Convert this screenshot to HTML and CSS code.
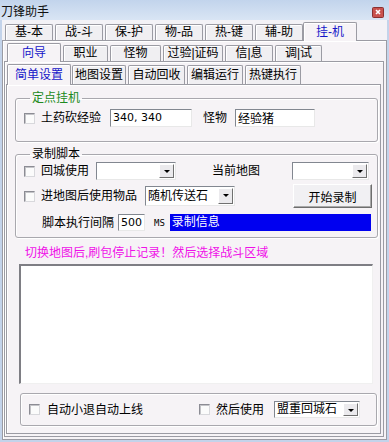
FILE: index.html
```html
<!DOCTYPE html>
<html lang="zh-CN">
<head>
    <meta charset="UTF-8">
    <title>刀锋助手</title>
    <link rel="stylesheet" href="styles.css">
</head>
<body>
<div class="window">
    <div class="titlebar">
        <span class="title">刀锋助手</span>
        <svg class="close-btn" width="12" height="11" viewBox="0 0 12 11">
            <rect x="0.5" y="0.5" width="11" height="10" rx="1" fill="#c9524e" stroke="#8a3030"/>
            <path d="M4 3 L8 7 M8 3 L4 7" stroke="#fff" stroke-width="1.6"/>
        </svg>
    </div>

    <div class="tabs tabs-main">
        <div class="tab">基-本</div>
        <div class="tab">战-斗</div>
        <div class="tab">保-护</div>
        <div class="tab">物-品</div>
        <div class="tab">热-键</div>
        <div class="tab">辅-助</div>
        <div class="tab active w54">挂-机</div>
    </div>

    <div class="page page-main">
        <div class="tabs tabs-sub">
            <div class="tab active w54">向导</div>
            <div class="tab w45">职业</div>
            <div class="tab w51">怪物</div>
            <div class="tab w60">过验|证码</div>
            <div class="tab w48">信|息</div>
            <div class="tab w47">调|试</div>
        </div>

        <div class="page page-sub">
            <div class="tabs tabs-inner">
                <div class="tab active w64">简单设置</div>
                <div class="tab w54">地图设置</div>
                <div class="tab w57">自动回收</div>
                <div class="tab w56">编辑运行</div>
                <div class="tab w56">热键执行</div>
            </div>

            <div class="page page-inner">
                <!-- 定点挂机 -->
                <fieldset class="group group-fixed">
                    <legend class="legend-green">定点挂机</legend>
                    <div class="row">
                        <span class="check"></span>
                        <span class="label">土药砍经验</span>
                        <span class="field field-coords">340, 340</span>
                        <span class="label label-monster">怪物</span>
                        <span class="field field-monster">经验猪</span>
                    </div>
                </fieldset>

                <!-- 录制脚本 -->
                <fieldset class="group group-record">
                    <legend>录制脚本</legend>
                    <div class="row row-1">
                        <span class="check"></span>
                        <span class="label">回城使用</span>
                        <span class="combo combo-town"><span class="combo-text"></span><span class="combo-btn"></span></span>
                        <span class="label label-map">当前地图</span>
                        <span class="combo combo-map"><span class="combo-text"></span><span class="combo-btn"></span></span>
                    </div>
                    <div class="row row-2">
                        <span class="check"></span>
                        <span class="label">进地图后使用物品</span>
                        <span class="combo combo-item"><span class="combo-text">随机传送石</span><span class="combo-btn"></span></span>
                        <button class="btn">开始录制</button>
                    </div>
                    <div class="row row-3">
                        <span class="label label-interval">脚本执行间隔</span>
                        <span class="field field-ms">500</span>
                        <span class="unit">MS</span>
                        <span class="record-info">录制信息</span>
                    </div>
                </fieldset>

                <div class="hint">切换地图后,刷包停止记录！然后选择战斗区域</div>

                <div class="log"></div>

                <div class="group group-bottom">
                    <span class="check"></span>
                    <span class="label label-relogin">自动小退自动上线</span>
                    <span class="check check-then"></span>
                    <span class="label">然后使用</span>
                    <span class="combo combo-stone"><span class="combo-text">盟重回城石</span><span class="combo-btn"></span></span>
                </div>
            </div>
        </div>
    </div>
</div>
</body>
</html>
```

FILE: styles.css
```css
* {
    box-sizing: border-box;
    margin: 0;
    padding: 0;
}

body {
    width: 389px;
    height: 442px;
    overflow: hidden;
    font-family: "Liberation Sans", "Noto Sans CJK SC", sans-serif;
    font-size: 12px;
    line-height: 14px;
    color: #000;
    background: #f3f2f6;
}

.window {
    height: 442px;
    display: flex;
    flex-direction: column;
    background: #f3f2f6;
    border-left: 2px solid #c3d3ea;
    border-right: 2px solid #c3d3ea;
    border-bottom: 2px solid #c3d3ea;
}

/* 标题栏 */
.titlebar {
    height: 20px;
    flex: none;
    display: flex;
    align-items: flex-end;
    justify-content: space-between;
    margin: 0 -2px;
    padding: 0 5px 1px 1px;
    background: linear-gradient(#c2d4ec, #d9e5f4);
}

.title {
    font-size: 12px;
    line-height: 14px;
    color: #111;
}

.close-btn {
    display: block;
    margin-bottom: 1px;
}

/* 选项卡 */
.tabs {
    display: flex;
    align-items: flex-end;
    flex: none;
}

.tab {
    position: relative;
    width: 48px;
    height: 16px;
    margin-right: 2px;
    border: 1px solid #9b9ba3;
    border-bottom: none;
    border-radius: 2px 2px 0 0;
    box-shadow: inset 1px 1px 0 #fff;
    background: #f0eff2;
    text-align: center;
    font-size: 12px;
    line-height: 15px;
}

.tab.active {
    z-index: 1;
    height: 19px;
    margin-bottom: -1px;
    background: #f6f3f6;
    color: #1515c8;
    line-height: 19px;
}

.tabs-main {
    height: 18px;
    margin-top: 2px;
    padding-left: 3px;
}

.tabs-main .tab.active {
    margin-left: -2px;
}

.tabs-sub {
    height: 18px;
    margin-top: 2px;
    padding-left: 3px;
}

.tabs-inner {
    height: 20px;
    margin-top: 2px;
    padding-left: 1px;
}

.tabs-inner .tab {
    height: 19px;
    line-height: 18px;
    margin-right: 2px;
}

.tabs-inner .tab.active {
    height: 21px;
    line-height: 20px;
    margin-right: 1px;
}

.w45 { width: 45px; }
.w47 { width: 47px; }
.w48 { width: 48px; }
.w51 { width: 51px; }
.w54 { width: 54px; }
.w56 { width: 56px; }
.w57 { width: 57px; }
.w60 { width: 60px; }
.w64 { width: 64px; }

/* 选项卡页 */
.page {
    flex: 1;
    display: flex;
    flex-direction: column;
    border: 1px solid #9b9ba3;
    box-shadow: inset 1px 1px 0 #fff;
    background: #f6f3f6;
}

.page-main {
    padding: 0 2px 2px 1px;
}

.page-sub {
    padding: 0 2px 2px 1px;
}

.page-inner {
    padding: 0 2px 0 8px;
}

/* 分组框 */
.group {
    border: 1px solid #a9a8ae;
    border-radius: 3px;
    box-shadow: inset 1px 1px 0 #fff, 1px 1px 0 #fff;
}

.group legend {
    margin-left: 6px;
    padding: 0 2px;
    font-size: 12px;
    line-height: 14px;
}

.legend-green {
    color: #208a20;
}

.group-fixed {
    margin-top: 6px;
    height: 51px;
    padding: 4px 0 0 8px;
}

.group-record {
    margin-top: 5px;
    height: 91px;
    padding: 1px 8px 0 8px;
}

.row {
    display: flex;
    align-items: center;
    height: 18px;
}

.row-2 {
    height: 24px;
    margin-top: 4px;
}

.row-3 {
    height: 17px;
    margin-top: 6px;
}

.check {
    flex: none;
    width: 11px;
    height: 11px;
    border: 1px solid #8c8c94;
    border-right-color: #d8d8dc;
    border-bottom-color: #d8d8dc;
    background: #fbfbfb;
    box-shadow: inset 1px 1px 0 #c4c4c8;
}

.label {
    margin-left: 6px;
    white-space: nowrap;
}

.field {
    height: 18px;
    padding: 0 2px;
    border: 1px solid #828790;
    border-right-color: #e8e8e8;
    border-bottom-color: #e8e8e8;
    background: #fff;
    font-family: "DejaVu Sans", "Noto Sans CJK SC", sans-serif;
    font-size: 11px;
    line-height: 16px;
    white-space: nowrap;
}

.field-coords {
    width: 82px;
    margin-left: 9px;
}

.label-monster {
    margin-left: 11px;
}

.field-monster {
    width: 80px;
    margin-left: 8px;
    font-family: "Noto Sans CJK SC", sans-serif;
    font-size: 12px;
}

/* 下拉框 */
.combo {
    display: flex;
    height: 18px;
    padding: 1px;
    border: 1px solid #828790;
    border-right-color: #e8e8e8;
    border-bottom-color: #e8e8e8;
    background: #fff;
}

.combo-text {
    flex: 1;
    padding-left: 1px;
    font-size: 12px;
    line-height: 14px;
    white-space: nowrap;
}

.combo-btn {
    flex: none;
    position: relative;
    width: 15px;
    border: 1px solid #fff;
    border-right-color: #707070;
    border-bottom-color: #707070;
    background: #ebeaed;
}

.combo-btn::after {
    content: "";
    position: absolute;
    left: 4px;
    top: 5px;
    border-left: 3px solid transparent;
    border-right: 3px solid transparent;
    border-top: 3px solid #000;
}

.combo-town {
    width: 80px;
    margin-left: 7px;
}

.label-map {
    margin-left: 36px;
}

.combo-map {
    width: 77px;
    margin-left: auto;
}

.combo-item {
    width: 90px;
    height: 20px;
    margin-left: 8px;
}

.combo-item .combo-text {
    line-height: 16px;
}

.btn {
    width: 79px;
    height: 24px;
    margin-left: auto;
    margin-right: -3px;
    border: 1px solid #fff;
    border-right-color: #6e6e6e;
    border-bottom-color: #6e6e6e;
    box-shadow: inset -1px -1px 0 #a8a8a8;
    background: #f1f0f3;
    font-family: "Noto Sans CJK SC", sans-serif;
    font-size: 12px;
    color: #000;
}

.label-interval {
    margin-left: 18px;
}

.field-ms {
    width: 27px;
    height: 17px;
    margin-left: 4px;
    line-height: 15px;
}

.unit {
    margin-left: 9px;
    font-family: "DejaVu Sans Mono", monospace;
    font-size: 9px;
}

.record-info {
    flex: 1;
    height: 17px;
    margin-left: 5px;
    margin-right: -2px;
    padding-left: 2px;
    background: #0000f0;
    color: #fff;
    line-height: 17px;
}

/* 提示与日志 */
.hint {
    margin: 8px 0 0 10px;
    color: #f010e8;
    line-height: 14px;
}

.log {
    width: 354px;
    height: 120px;
    margin: 4px 0 0 4px;
    border: 1px solid #7e7e84;
    border-left-width: 2px;
    border-top-width: 2px;
    border-right-color: #f0f0f0;
    border-bottom-color: #f0f0f0;
    background: #fff;
}

.group-bottom {
    display: flex;
    align-items: center;
    width: 357px;
    height: 33px;
    margin: 9px 0 0 5px;
    padding-left: 8px;
}

.label-relogin {
    margin-left: 7px;
}

.check-then {
    margin-left: 56px;
}

.combo-stone {
    width: 86px;
    height: 17px;
    margin-left: 10px;
}

.combo-stone .combo-text {
    line-height: 13px;
    font-size: 12px;
}
```
